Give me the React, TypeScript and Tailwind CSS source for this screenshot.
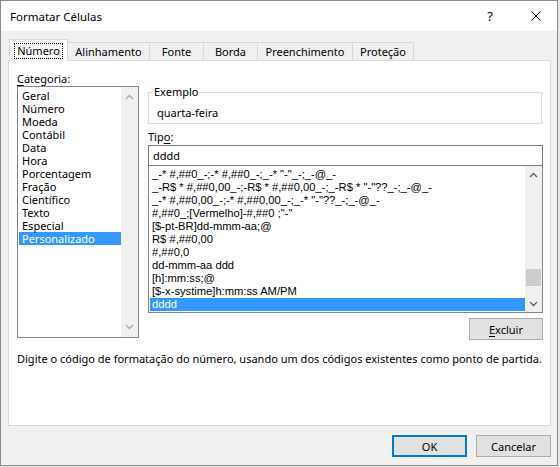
import React from 'react';

// Caixa de diálogo "Formatar Células" no estilo Windows 10

const ui = { fontFamily: '"Noto Sans", "Liberation Sans", sans-serif' };
const listFont = { fontFamily: '"Liberation Sans", "DejaVu Sans", sans-serif' };

const categorias = [
  'Geral', 'Número', 'Moeda', 'Contábil', 'Data', 'Hora', 'Porcentagem',
  'Fração', 'Científico', 'Texto', 'Especial', 'Personalizado',
];

const formatos = [
  '_-* #,##0_-;-* #,##0_-;_-* "-"_-;_-@_-',
  '_-R$ * #,##0,00_-;-R$ * #,##0,00_-;_-R$ * "-"??_-;_-@_-',
  '_-* #,##0,00_-;-* #,##0,00_-;_-* "-"??_-;_-@_-',
  '#,##0_;[Vermelho]-#,##0 ;"-"',
  '[$-pt-BR]dd-mmm-aa;@',
  'R$ #,##0,00',
  '#,##0,0',
  'dd-mmm-aa ddd',
  '[h]:mm:ss;@',
  '[$-x-systime]h:mm:ss AM/PM',
  'dddd',
];

const tabs = [
  { label: 'Alinhamento', w: 'w-[82px]' },
  { label: 'Fonte', w: 'w-[54px]' },
  { label: 'Borda', w: 'w-[54px]' },
  { label: 'Preenchimento', w: 'w-[95px]' },
  { label: 'Proteção', w: 'w-[61px]' },
];

const Chevron = ({ up, color }: { up?: boolean; color: string }) => (
  <svg width="9" height="6" viewBox="0 0 9 6">
    <path d={up ? 'M1 5 L4.5 1.5 L8 5' : 'M1 1 L4.5 4.5 L8 1'} fill="none" stroke={color} strokeWidth="1.3" />
  </svg>
);

export default function App() {
  return (
    <div className="w-[560px] h-[467px] bg-[#e6e6e6] overflow-hidden text-[11px] text-black" style={ui}>
      <div className="w-[558px] h-[466px] border border-[#8c8c8c] bg-[#f0f0f0] flex flex-col">
        {/* barra de título */}
        <div className="h-[30px] bg-white flex items-center shrink-0">
          <span className="ml-[9px] text-[11.5px] leading-[15px]">Formatar Células</span>
          <span className="ml-auto mr-[38px] text-[13px] leading-[15px]">?</span>
          <svg width="10" height="10" viewBox="0 0 10 10" className="mr-[16px]">
            <path d="M0.5 0.5 L9.5 9.5 M9.5 0.5 L0.5 9.5" stroke="#000" strokeWidth="1" />
          </svg>
        </div>

        {/* abas */}
        <div className="flex items-end ml-[8px] mt-[8px] h-[21px] relative z-10">
          <div className="w-[59px] h-[22px] -mb-px bg-white border border-b-0 border-[#d9d9d9] flex items-center justify-center">
            <span className="border border-dotted border-black px-[2px] leading-[13px] pb-px">Número</span>
          </div>
          {tabs.map((t) => (
            <div
              key={t.label}
              className={`${t.w} h-[18px] border-t border-r border-[#d9d9d9] flex items-center justify-center leading-[15px]`}
            >
              {t.label}
            </div>
          ))}
        </div>

        {/* painel */}
        <div className="ml-[7px] w-[543px] h-[366px] bg-white border border-[#d9d9d9] shrink-0">
          <div className="flex ml-[8px]">
            {/* categoria */}
            <div className="flex flex-col">
              <div className="mt-[10px] leading-[15px]">
                <span className="underline underline-offset-2">C</span>ategoria:
              </div>
              <div className="w-[122px] h-[252px] border border-[#828790] flex">
                <div className="flex-1 pt-[2px] pl-px">
                  {categorias.map((c) => (
                    <div
                      key={c}
                      className={`h-[13px] leading-[13px] pl-[3px] ${c === 'Personalizado' ? 'bg-[#3399ff] text-white' : ''}`}
                    >
                      {c}
                    </div>
                  ))}
                </div>
                <div className="w-[17px] bg-[#f0f0f0] flex flex-col items-center justify-between py-[7px]">
                  <Chevron up color="#a6a6a6" />
                  <Chevron color="#a6a6a6" />
                </div>
              </div>
            </div>

            {/* tipo */}
            <div className="ml-[9px] w-[395px] flex flex-col">
              <div className="mt-[31px] w-[394px] h-[32px] border border-[#dcdcdc] relative pl-[8px] pt-[12px] leading-[15px]">
                <span className="absolute -top-[9px] left-[4px] bg-white px-[1px] leading-[15px]">Exemplo</span>
                quarta-feira
              </div>
              <div className="mt-[5px] leading-[15px]">
                Tip<span className="underline underline-offset-2">o</span>:
              </div>
              <div className="mt-px h-[21px] border border-[#7a7a7a] pl-[4px] leading-[19px]">dddd</div>
              <div className="h-[147px] border border-t-0 border-[#828790] flex">
                <div className="flex-1 pt-[2px] pl-px text-[11.2px]" style={listFont}>
                  {formatos.map((f, i) => (
                    <div
                      key={i}
                      className={`h-[13px] leading-[13px] pl-[2px] whitespace-pre overflow-hidden ${f === 'dddd' ? 'bg-[#3399ff] text-white' : ''}`}
                    >
                      {f}
                    </div>
                  ))}
                </div>
                <div className="w-[17px] bg-[#f0f0f0] flex flex-col items-center">
                  <div className="h-[17px] flex items-center justify-center">
                    <Chevron up color="#606060" />
                  </div>
                  <div className="flex-1 w-full flex flex-col justify-end px-px pb-[9px]">
                    <div className="h-[17px] bg-[#cdcdcd]" />
                  </div>
                  <div className="h-[17px] flex items-center justify-center">
                    <Chevron color="#606060" />
                  </div>
                </div>
              </div>
              <button className="self-end mt-[5px] w-[74px] h-[22px] bg-[#e1e1e1] border border-[#adadad] leading-[15px]">
                <span className="underline underline-offset-2">E</span>xcluir
              </button>
            </div>
          </div>

          <div className="ml-[8px] mt-[11px] leading-[15px] whitespace-nowrap">
            Digite o código de formatação do número, usando um dos códigos existentes como ponto de partida.
          </div>
        </div>

        {/* botões */}
        <div className="flex justify-end gap-[9px] mt-[9px] pr-[6px]">
          <button className="w-[75px] h-[22px] bg-[#e1e1e1] border-2 border-[#0078d7] leading-[15px]">OK</button>
          <button className="w-[75px] h-[22px] bg-[#e1e1e1] border border-[#adadad] leading-[15px]">Cancelar</button>
        </div>
      </div>
    </div>
  );
}
